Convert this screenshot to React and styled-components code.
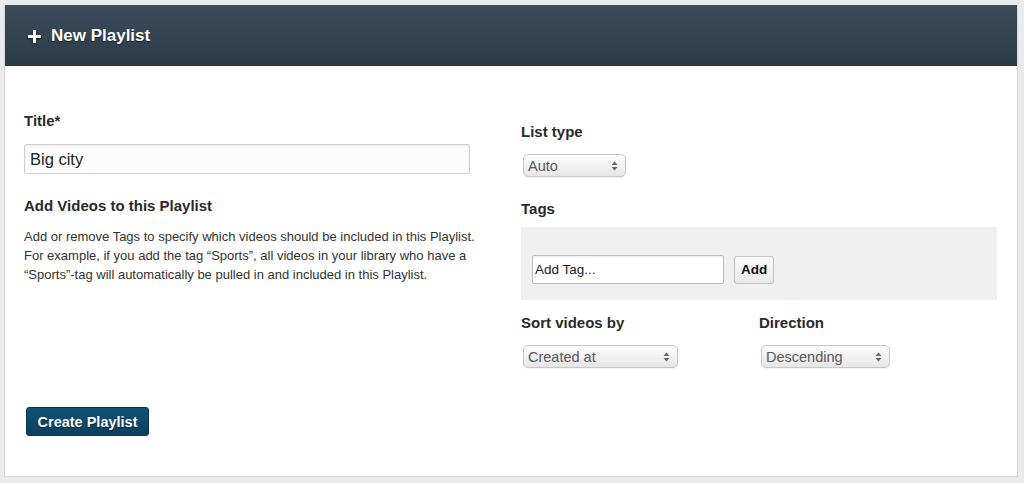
import React from "react";
import styled, { createGlobalStyle } from "styled-components";

const Global = createGlobalStyle`
  html, body { margin: 0; padding: 0; }
  body {
    background: #eaebed;
    font-family: "Liberation Sans", Arial, Helvetica, sans-serif;
    color: #222;
  }
  * { box-sizing: border-box; }
`;

const Page = styled.div`
  padding: 5px 6px 6px 4px;
  height: 483px;
`;

const Panel = styled.div`
  background: #fff;
  border: 1px solid #d6d7d9;
  border-top: none;
  height: 472px;
  display: flex;
  flex-direction: column;
`;

const Header = styled.div`
  height: 62px;
  background: linear-gradient(to bottom, #394c5c 0%, #2d3b47 100%);
  display: flex;
  align-items: center;
  padding: 2px 0 0 23px;
  gap: 10px;
  color: #fff;
  border-bottom: 1px solid #25313a;
`;

const HeaderTitle = styled.h1`
  margin: 0;
  font-size: 17px;
  font-weight: bold;
  text-shadow: 0 1px 1px rgba(0, 0, 0, 0.6);
`;

const Body = styled.form`
  padding: 45px 20px 40px 19px;
  display: flex;
  flex-direction: column;
`;

const Columns = styled.div`
  display: grid;
  grid-template-columns: 450px 1fr;
  column-gap: 47px;
`;

const Column = styled.div`
  display: flex;
  flex-direction: column;
  padding-top: ${(p) => p.$offset || 0}px;
`;

const Label = styled.label`
  display: block;
  font-size: 15px;
  font-weight: bold;
  line-height: 20px;
  color: #2a2a2a;
  margin-top: ${(p) => p.$mt || 0}px;
  margin-bottom: ${(p) => (p.$mb == null ? 12 : p.$mb)}px;
`;

const TextInput = styled.input`
  width: 446px;
  height: 30px;
  border: 1px solid #cfcfcf;
  border-radius: 2px;
  background: #fcfcfc;
  box-shadow: inset 0 1px 2px rgba(0, 0, 0, 0.08);
  font-family: inherit;
  font-size: 16.5px;
  color: #222;
  padding: 0 5px;
  outline: none;
`;

const Help = styled.p`
  margin: 11px 0 0;
  font-size: 13px;
  line-height: 19px;
  color: #333;
  width: 480px;
  white-space: nowrap;
`;

const SelectWrap = styled.div`
  position: relative;
  width: ${(p) => p.$w}px;
  height: 23px;
  margin-left: 2px;
`;

const Select = styled.select`
  appearance: none;
  -webkit-appearance: none;
  width: 100%;
  height: 100%;
  border: 1px solid #c7c7c7;
  border-radius: 5px;
  background: linear-gradient(to bottom, #fdfdfd 0%, #f1f1f1 50%, #e6e6e6 100%);
  box-shadow: 0 1px 1px rgba(0, 0, 0, 0.05);
  font-family: inherit;
  font-size: 14.5px;
  color: #585858;
  padding: 0 4px;
  outline: none;
`;

const Arrows = styled.svg`
  position: absolute;
  right: 8px;
  top: 7px;
  pointer-events: none;
`;

const TagBox = styled.div`
  background: #f0f0f0;
  padding: 28px 11px 16px;
  margin-top: 8px;
  display: flex;
  align-items: center;
  gap: 10px;
`;

const TagInput = styled.input`
  width: 192px;
  height: 29px;
  border: 1px solid #bdbdbd;
  border-radius: 2px;
  background: #fff;
  box-shadow: inset 0 1px 2px rgba(0, 0, 0, 0.07);
  font-family: inherit;
  font-size: 13.5px;
  color: #222;
  padding: 0 2px;
  outline: none;
  &::placeholder { color: #222; }
`;

const AddButton = styled.button`
  height: 28px;
  padding: 0 6px;
  border: 1px solid #c1c1c1;
  border-radius: 3px;
  background: linear-gradient(to bottom, #fafafa, #e9e9e9);
  font-family: inherit;
  font-size: 13.5px;
  font-weight: bold;
  color: #111;
`;

const SortRow = styled.div`
  display: grid;
  grid-template-columns: 238px 1fr;
  margin-top: 13px;
`;

const SortCell = styled.div`
  display: flex;
  flex-direction: column;
`;

const Primary = styled.button`
  align-self: flex-start;
  margin-top: 39px;
  margin-left: 2px;
  height: 29px;
  width: 123px;
  padding: 0;
  border: 1px solid #07344f;
  border-radius: 3px;
  background: linear-gradient(to bottom, #115274, #0a3f5e);
  color: #fff;
  font-family: inherit;
  font-size: 14.5px;
  font-weight: bold;
  text-shadow: 0 1px 1px rgba(0, 0, 0, 0.5);
`;

const UpDown = () => (
  <Arrows width="7" height="10" viewBox="0 0 7 10">
    <path d="M3.5 0.5 L6.5 4 L0.5 4 Z" fill="#666" />
    <path d="M3.5 9.5 L6.5 6 L0.5 6 Z" fill="#666" />
  </Arrows>
);

const Dropdown = ({ w, value }) => (
  <SelectWrap $w={w}>
    <Select defaultValue={value}>
      <option>{value}</option>
    </Select>
    <UpDown />
  </SelectWrap>
);

const Plus = () => (
  <svg width="13" height="13" viewBox="0 0 13 13" style={{ filter: "drop-shadow(0 1px 1px rgba(0,0,0,.6))" }}>
    <rect x="5" y="0" width="3" height="13" fill="#fff" />
    <rect x="0" y="5" width="13" height="3" fill="#fff" />
  </svg>
);

export default function App() {
  return (
    <>
      <Global />
      <Page>
        <Panel>
          <Header>
            <Plus />
            <HeaderTitle>New Playlist</HeaderTitle>
          </Header>
          <Body onSubmit={(e) => e.preventDefault()}>
            <Columns>
              <Column>
                <Label $mb={13}>Title*</Label>
                <TextInput defaultValue="Big city" />
                <Label $mt={22} $mb={0}>Add Videos to this Playlist</Label>
                <Help>
                  Add or remove Tags to specify which videos should be included in this Playlist.
                  <br />
                  For example, if you add the tag “Sports”, all videos in your library who have a
                  <br />
                  “Sports”-tag will automatically be pulled in and included in this Playlist.
                </Help>
              </Column>
              <Column $offset={11}>
                <Label>List type</Label>
                <Dropdown w={103} value="Auto" />
                <Label $mt={22} $mb={0}>Tags</Label>
                <TagBox>
                  <TagInput placeholder="Add Tag..." />
                  <AddButton type="button">Add</AddButton>
                </TagBox>
                <SortRow>
                  <SortCell>
                    <Label>Sort videos by</Label>
                    <Dropdown w={155} value="Created at" />
                  </SortCell>
                  <SortCell>
                    <Label>Direction</Label>
                    <Dropdown w={129} value="Descending" />
                  </SortCell>
                </SortRow>
              </Column>
            </Columns>
            <Primary type="submit">Create Playlist</Primary>
          </Body>
        </Panel>
      </Page>
    </>
  );
}
